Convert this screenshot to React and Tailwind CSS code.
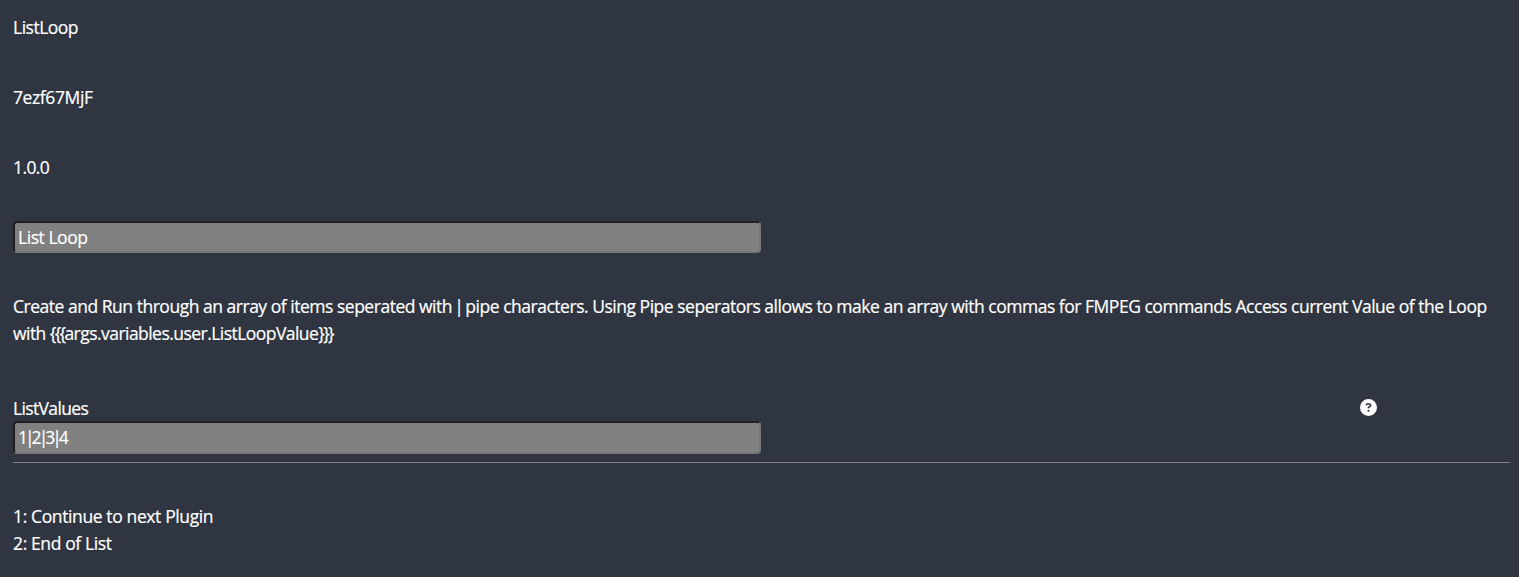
import { FaCircleQuestion } from 'react-icons/fa6';

const inputClass =
  'block w-[748px] rounded-[4px] border-2 border-t-[#212121] border-l-[#212121] border-r-[#767676] border-b-[#767676] bg-[#808080] px-[3px] text-white outline-none';

export default function App() {
  return (
    <main className="flex h-[577px] flex-col overflow-hidden bg-[#2f3541] pt-[14px] pr-[9px] pl-[13px] font-['Open_Sans',sans-serif] text-[17.5px] leading-[27px] text-white [-webkit-text-stroke:0.2px_white]">
      <p className="tracking-[-0.5px]">ListLoop</p>
      <p className="mt-[43px] tracking-[-0.4px]">7ezf67MjF</p>
      <p className="mt-[43px] tracking-[-0.6px]">1.0.0</p>
      <input className={`${inputClass} mt-[40px] h-[32px] tracking-[-0.45px]`} defaultValue="List Loop" />
      <p className="mt-[40px] tracking-[-0.48px]">
        <span className="block whitespace-nowrap">
          Create and Run through an array of items seperated with
          <span className="mx-[-2px]"> | </span>
          pipe characters. Using Pipe seperators allows to make an array with commas for FMPEG commands Access current Value of the Loop
        </span>
        <span className="block tracking-[-0.54px]">
          with <span className="tracking-[-1.7px]">{'{{{'}</span>args.variables.user.ListLoopValue<span className="tracking-[-1.7px]">{'}}}'}</span>
        </span>
      </p>
      <section className="mt-[48px] border-b border-[#808080] pb-[8px]">
        <div className="flex h-[26px] items-center justify-between pr-[133px]">
          <label className="pt-px tracking-[-0.65px]">ListValues</label>
          <FaCircleQuestion className="mb-px size-[17px]" />
        </div>
        <input className={`${inputClass} h-[33px] pb-px tracking-[-3px]`} defaultValue="1|2|3|4" />
      </section>
      <div className="mt-[40px] tracking-[-0.38px]">
        <p>1: Continue to next Plugin</p>
        <p>2: End of List</p>
      </div>
    </main>
  );
}
